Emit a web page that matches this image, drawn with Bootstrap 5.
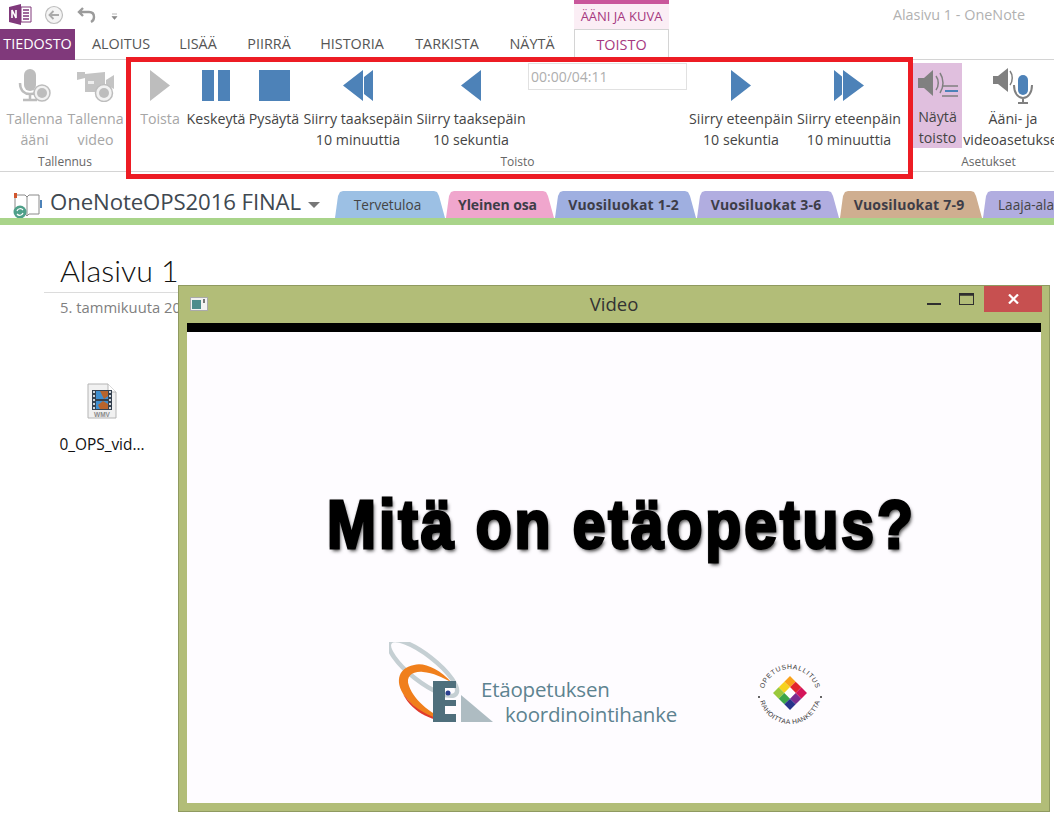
<!DOCTYPE html>
<html lang="fi">
<head>
<meta charset="UTF-8">
<title>Alasivu 1 - OneNote</title>
<link href="https://cdn.jsdelivr.net/npm/bootstrap@5.3.0/dist/css/bootstrap.min.css" rel="stylesheet">
<style>
body { font-family: "Open Sans", "Noto Sans", sans-serif; font-size: 14.2px; color: #444; background: #fff; overflow: hidden; }
.app { position: relative; width: 1054px; height: 815px; overflow: hidden; }

/* title bar */
.title-bar { height: 29px; padding-left: 9px; }
.title-text { color: #b1b1b1; font-size: 14.4px; margin-left: auto; margin-right: 29px; }
.ctx-head { position: absolute; left: 574px; top: 0; width: 95px; height: 29px; background: #fbeef5; border-top: 4px solid #c9579b; color: #a5387f; font-size: 13px; text-align: center; line-height: 24px; }

/* tabs */
.tab-row { height: 31px; border-bottom: 1px solid #d4d4d4; font-size: 14.4px; color: #555; }
.tab-item { text-align: center; line-height: 30px; flex: none; }
.tab-file { width: 75px; background: #80397b; color: #fff; height: 31px; }
.tab-active { width: 95px; height: 31px; background: #fff; border: 1px solid #d4d4d4; border-bottom: 0; color: #a5387f; line-height: 29px; }

/* ribbon */
.ribbon { height: 112px; border-bottom: 1px solid #d4d4d4; }
.rib-group { height: 100%; display: flex; flex-direction: column; flex: none; }
.rib-items { display: flex; height: 94px; padding-top: 3px; }
.rib-label { text-align: center; font-size: 12px; color: #666; line-height: 16px; }
.rib-btn { text-align: center; line-height: 21px; white-space: nowrap; display: flex; flex-direction: column; align-items: center; flex: none; }
.rib-icon { height: 44px; display: flex; align-items: center; justify-content: center; margin-bottom: 1px; }
.is-off { color: #a6a6a6; }
.is-on { background: #e0bfde; }
.time-box { width: 159px; height: 27px; border: 1px solid #e1e1e1; color: #aeaeae; font-size: 14px; line-height: 25px; padding-left: 2px; margin-left: -1px; margin-right: 2px; flex: none; }
.hilite { position: absolute; left: 126px; top: 57px; width: 787px; height: 122px; border: 5px solid #ed1c24; pointer-events: none; }

/* notebook bar */
.nb-bar { height: 53px; padding-left: 12px; border-bottom: 7px solid #a9d48a; }
.nb-name { font-size: 22.2px; color: #404850; margin-left: 8px; letter-spacing: -.1px; padding-bottom: 6px; }
.nb-caret { width: 0; height: 0; border: 6px solid transparent; border-top: 6px solid #777; border-bottom: 0; margin-left: 7px; margin-top: 1px; }
.nb-tabs { gap: 1px; height: 27px; }
.nb-tab { height: 27px; line-height: 28px; text-align: center; font-size: 13.6px; white-space: nowrap; flex: none; padding-right: 5px; clip-path: polygon(0 100%, 3px 5px, 5px 1px, 8px 0, calc(100% - 11px) 0, calc(100% - 8px) 1px, calc(100% - 6px) 5px, 100% 100%); }
.nb-tab.fat { font-weight: 700; font-size: 14px; color: #3d3d48; letter-spacing: -.1px; }
.nb-tab.fat.wide { letter-spacing: .2px; padding-right: 4px; }
.nb-tab.last { padding-left: 15px; padding-right: 0; text-align: left; clip-path: polygon(0 100%, 3px 5px, 5px 1px, 8px 0, 100% 0, 100% 100%); }

/* page */
.page-head { margin-top: 25px; margin-left: 44px; }
.page-title { font-family: "Lato", sans-serif; font-weight: 300; font-size: 30.4px; color: #111; padding-left: 16px; line-height: 41px; border-bottom: 1px solid #dcdcdc; height: 43px; width: 200px; }
.page-date { padding-left: 16px; color: #7f7f7f; font-size: 14.8px; line-height: 28px; }
.file-att { margin-top: 62px; width: 100px; margin-left: 52px; text-align: center; color: #111; font-size: 15.4px; white-space: nowrap; }
.file-att svg { display: block; margin: 0 auto 14px; }

/* video window */
.vid-win { position: absolute; left: 178px; top: 285px; width: 872px; height: 527px; background: #b2bd78; border: 1px solid #8f9a60; padding: 0 8px 8px; display: flex; flex-direction: column; }
.vid-title { height: 37px; position: relative; text-align: center; color: #333; font-size: 18.5px; line-height: 36px; }
.vid-title .sys { position: absolute; left: 3px; top: 11px; }
.vid-ctrl { position: absolute; right: -1px; top: 0; display: flex; align-items: flex-start; }
.vid-ctrl svg { display: block; }
.vid-close { width: 58px; height: 26px; background: #c75050; display: flex; align-items: center; justify-content: center; }
.vid-strip { height: 9px; background: #000; }
.vid-body { flex: 1; background: #fefcff; display: flex; flex-direction: column; align-items: center; }
.vid-head { margin-top: 151px; margin-left: 14px; height: 82px; font-family: "Liberation Sans", sans-serif; font-weight: 700; font-size: 68px; line-height: 82px; color: #000; -webkit-text-stroke: 3px #000; letter-spacing: 3.4px; text-shadow: 2px 3px 4px #444, -1px -1px 2px #999; white-space: nowrap; transform: scaleX(.865); }
.logo-row { margin-top: 77px; width: 100%; display: flex; align-items: flex-start; padding-left: 202px; }
.logo-name { color: #5d8390; font-size: 20.5px; line-height: 25px; margin-left: -18px; padding-top: 35px; letter-spacing: -.2px; }
.logo-name span { display: block; }
.logo-name .second { padding-left: 24px; }
.logo-badge { margin-left: 80px; margin-top: 18px; }
</style>
</head>
<body>
<div class="app">

  <!-- otsikkorivi -->
  <div class="title-bar d-flex align-items-center">
    <svg width="23" height="21" viewBox="0 0 23 21"><path d="M0 3 12 0v21L0 18z" fill="#80397b"/><path d="M12 3h10v15H12z" fill="#fff" stroke="#80397b"/><path d="M14 6h6M14 9h6M14 12h6M14 15h6" stroke="#80397b" stroke-width="1.5"/><path d="M3 14V6l4 8V6" fill="none" stroke="#fff" stroke-width="1.6"/></svg>
    <svg width="20" height="20" viewBox="0 0 20 20" style="margin-left:12px"><circle cx="10" cy="10" r="8.5" fill="#f4f4f4" stroke="#bdbdbd" stroke-width="1.2"/><path d="M15 10H6M9.500 6 5.500 10l4 4" fill="none" stroke="#aaa" stroke-width="1.8"/></svg>
    <svg width="20" height="18" viewBox="0 0 20 18" style="margin-left:13px"><path d="M6 2 2 6l4 4M2 6h10c4 0 5 3 5 5s-1 4-3 5" fill="none" stroke="#9b9b9b" stroke-width="2.400"/></svg>
    <svg width="7" height="7" viewBox="0 0 7 7" style="margin-left:14px;margin-top:3px"><path d="M1 1h5M1 3.500h5L3.500 6.500z" fill="#888" stroke="#888" stroke-width=".6"/></svg>
    <span class="title-text">Alasivu 1 - OneNote</span>
  </div>
  <div class="ctx-head">ÄÄNI JA KUVA</div>

  <!-- välilehdet -->
  <div class="tab-row d-flex">
    <div class="tab-item tab-file">TIEDOSTO</div>
    <div class="tab-item" style="width:92px">ALOITUS</div>
    <div class="tab-item" style="width:62px">LISÄÄ</div>
    <div class="tab-item" style="width:80px">PIIRRÄ</div>
    <div class="tab-item" style="width:86px">HISTORIA</div>
    <div class="tab-item" style="width:104px">TARKISTA</div>
    <div class="tab-item" style="width:66px;margin-right:9px">NÄYTÄ</div>
    <div class="tab-item tab-active">TOISTO</div>
  </div>

  <!-- nauha -->
  <div class="ribbon d-flex">
    <div class="rib-group" style="width:130px">
      <div class="rib-items">
        <div class="rib-btn is-off" style="width:65px;padding-left:4px">
          <div class="rib-icon"><svg width="34" height="34" viewBox="0 0 34 34"><rect x="6" y="1" width="12" height="22" rx="6" fill="#bdbdbd"/><path d="M2 15c0 8 5 11 10 11s8-2 9-5M12 26v5M5 32h14" fill="none" stroke="#bdbdbd" stroke-width="2.500"/><circle cx="24" cy="25" r="8" fill="#f2f2f2" stroke="#bdbdbd" stroke-width="1.500"/><circle cx="24" cy="25" r="5" fill="#bdbdbd"/></svg></div>
          <div>Tallenna<br>ääni</div>
        </div>
        <div class="rib-btn is-off" style="width:61px">
          <div class="rib-icon"><svg width="38" height="34" viewBox="0 0 38 34"><path d="M0 4h8v2l20-2v20H8V10L0 12z" fill="#c4c4c4"/><path d="M29 12l8-5v14l-8-4z" fill="#c4c4c4"/><rect x="11" y="13" width="6" height="3" fill="#eee"/><circle cx="27" cy="25" r="8.500" fill="#f2f2f2" stroke="#bdbdbd" stroke-width="1.500"/><circle cx="27" cy="25" r="5" fill="#bdbdbd"/></svg></div>
          <div>Tallenna<br>video</div>
        </div>
      </div>
      <div class="rib-label">Tallennus</div>
    </div>

    <div class="rib-group" style="width:783px">
      <div class="rib-items">
        <div class="rib-btn is-off" style="width:60px">
          <div class="rib-icon"><svg width="20" height="31" viewBox="0 0 20 31"><path d="M0 0l20 15.500L0 31z" fill="#bdbdbd"/></svg></div>
          <div>Toista</div>
        </div>
        <div class="rib-btn" style="width:52px">
          <div class="rib-icon"><svg width="28" height="31" viewBox="0 0 28 31"><path d="M0 0h12v31H0zM16 0h12v31H16z" fill="#4d82b8"/></svg></div>
          <div>Keskeytä</div>
        </div>
        <div class="rib-btn" style="width:64px">
          <div class="rib-icon"><svg width="31" height="31" viewBox="0 0 31 31"><path d="M0 0h31v31H0z" fill="#4d82b8"/></svg></div>
          <div>Pysäytä</div>
        </div>
        <div class="rib-btn" style="width:104px">
          <div class="rib-icon"><svg width="30" height="31" viewBox="0 0 30 31"><path d="M20 0v31L0 15.500zM30 0v31l-9-7V7z" fill="#4d82b8"/></svg></div>
          <div>Siirry taaksepäin<br>10 minuuttia</div>
        </div>
        <div class="rib-btn" style="width:116px;margin-left:3px">
          <div class="rib-icon"><svg width="20" height="31" viewBox="0 0 20 31"><path d="M20 0v31L0 15.500z" fill="#4d82b8"/></svg></div>
          <div>Siirry taaksepäin<br>10 sekuntia</div>
        </div>
        <div class="time-box">00:00/04:11</div>
        <div class="rib-btn" style="width:104px">
          <div class="rib-icon"><svg width="20" height="31" viewBox="0 0 20 31"><path d="M0 0v31l20-15.500z" fill="#4d82b8"/></svg></div>
          <div>Siirry eteenpäin<br>10 sekuntia</div>
        </div>
        <div class="rib-btn" style="width:112px">
          <div class="rib-icon"><svg width="30" height="31" viewBox="0 0 30 31"><path d="M0 0l8 6.500v18L0 31zM9 0v31l21-15.500z" fill="#4d82b8"/></svg></div>
          <div>Siirry eteenpäin<br>10 minuuttia</div>
        </div>
      </div>
      <div class="rib-label pe-2">Toisto</div>
    </div>

    <div class="rib-group" style="width:151px">
      <div class="rib-items">
        <div class="rib-btn is-on" style="width:49px;height:85px">
          <div class="rib-icon"><svg width="40" height="34" viewBox="0 0 40 34"><path d="M0 11h6l9-8v26l-9-8H0z" fill="#808080"/><path d="M18 9c3 4 3 10 0 14M22 6c4 6 4 14 0 20" fill="none" stroke="#808080" stroke-width="1.500"/><path d="M24 19h16M24 29h16" stroke="#808080" stroke-width="1.500"/><path d="M27 24h13" stroke="#4d82b8" stroke-width="2"/></svg></div>
          <div>Näytä<br>toisto</div>
        </div>
        <div class="rib-btn" style="width:92px;margin-left:5px">
          <div class="rib-icon"><svg width="40" height="38" viewBox="0 0 40 38"><path d="M0 10h5l10-8v24L5 18H0z" fill="#808080"/><path d="M17 5c3 4 3 10 0 14" fill="none" stroke="#808080" stroke-width="1.500"/><rect x="25" y="9" width="10" height="20" rx="5" fill="#4d82b8"/><path d="M21 19c0 8 4 13 9 13s9-5 9-13M30 32v4M25 37h10" fill="none" stroke="#808080" stroke-width="2"/></svg></div>
          <div>Ääni- ja<br>videoasetukset</div>
        </div>
      </div>
      <div class="rib-label">Asetukset</div>
    </div>
  </div>
  <div class="hilite"></div>

  <!-- muistikirjan rivi -->
  <div class="nb-bar d-flex align-items-end">
    <div class="d-flex align-items-center" style="height:27px;flex:none;width:323px">
      <svg width="30" height="26" viewBox="0 0 30 26"><path d="M3 3h10l2 2 2-2h10v19H17l-2 2-2-2H3z" fill="#fff" stroke="#8a8a8a"/><path d="M15 5v18" stroke="#8a8a8a"/><path d="M2 1h3v5H2z" fill="#d2562e"/><path d="M28 8h2v8h-2z" fill="#4d82b8"/><circle cx="8" cy="20" r="6.500" fill="#4fa089"/><path d="M5 19a3.500 3.500 0 0 1 6-1M11 21a3.500 3.500 0 0 1-6 1" fill="none" stroke="#fff" stroke-width="1.200"/></svg>
      <span class="nb-name text-nowrap">OneNoteOPS2016 FINAL</span>
      <span class="nb-caret"></span>
    </div>
    <div class="nb-tabs d-flex">
      <div class="nb-tab" style="width:110px;background:#9cc0e4">Tervetuloa</div>
      <div class="nb-tab fat" style="width:108px;background:#f0a6cd">Yleinen osa</div>
      <div class="nb-tab fat wide" style="width:141px;background:#9fafe0">Vuosiluokat 1-2</div>
      <div class="nb-tab fat wide" style="width:142px;background:#b1ade0">Vuosiluokat 3-6</div>
      <div class="nb-tab fat wide" style="width:142px;background:#cfae90">Vuosiluokat 7-9</div>
      <div class="nb-tab last" style="width:72px;background:#b1ade0">Laaja-ala</div>
    </div>
  </div>

  <!-- sivu -->
  <div class="page-head">
    <div class="page-title">Alasivu 1</div>
    <div class="page-date text-nowrap">5. tammikuuta 2016</div>
  </div>
  <div class="file-att">
    <svg width="30" height="36" viewBox="0 0 30 36"><path d="M1 1h20l8 8v26H1z" fill="#f1f1f1" stroke="#b5b5b5"/><path d="M21 1v8h8" fill="#fff" stroke="#b5b5b5"/><rect x="5" y="7" width="20" height="20" fill="#35414f"/><path d="M6 8h2v2H6zM6 12h2v2H6zM6 16h2v2H6zM6 20h2v2H6zM6 24h2v2H6zM22 8h2v2h-2zM22 12h2v2h-2zM22 16h2v2h-2zM22 20h2v2h-2zM22 24h2v2h-2z" fill="#cfd6dc"/><rect x="9" y="8" width="12" height="8" fill="#3f8fd0"/><rect x="9" y="18" width="12" height="8" fill="#3f8fd0"/><path d="M13 8h8v5l-4 3zM11 22l5-4 5 3v5h-8z" fill="#b8642c"/><text x="15" y="34" text-anchor="middle" font-family="Liberation Sans, sans-serif" font-size="6.500" font-weight="700" fill="#8a8a8a">WMV</text></svg>
    <div>0_OPS_vid...</div>
  </div>

  <!-- videoikkuna -->
  <div class="vid-win">
    <div class="vid-title">
      <svg class="sys" width="18" height="14" viewBox="0 0 18 14"><rect x=".5" y=".5" width="17" height="13" fill="#f2f2f2" stroke="#aaa"/><rect x="2" y="3" width="9" height="9" fill="#4c8c8c"/><rect x="13" y="2" width="2" height="4" fill="#777"/></svg>
      Video
      <div class="vid-ctrl">
        <svg width="31" height="26" viewBox="0 0 31 26"><path d="M0 18h14" stroke="#2f2f2f" stroke-width="2"/></svg>
        <svg width="26" height="26" viewBox="0 0 26 26"><rect x="1.500" y="7.500" width="14" height="11" fill="none" stroke="#2f2f2f"/><path d="M1.500 8.500h14" stroke="#2f2f2f" stroke-width="2.500"/></svg>
        <div class="vid-close"><svg width="11" height="10" viewBox="0 0 11 10"><path d="M1 .5l9 9M10 .5l-9 9" stroke="#fff" stroke-width="2.200"/></svg></div>
      </div>
    </div>
    <div class="vid-strip"></div>
    <div class="vid-body">
      <div class="vid-head">Mitä on etäopetus?</div>
      <div class="logo-row">
        <svg width="110" height="84" viewBox="0 0 110 84">
          <ellipse cx="34" cy="26" rx="42" ry="13" transform="rotate(38 34 26)" fill="none" stroke="#c5cfd3" stroke-width="4.500"/>
          <path d="M63 41C50 26 34 20 25 23 8 26 5 42 18 57 30 72 48 79 64 80 44 74 26 60 20 44 16 34 24 29 34 30 44 31 54 35 63 41z" fill="#f07f1c"/>
          <path d="M14 52c4 5 6 7 10 11 12 10 26 15 40 17-18 0-40-8-50-28z" fill="#e03a2c"/>
          <path d="M44 39h23v7H56v12h11v6H56v8h11v8H44z" fill="#4f6f7c"/>
          <circle cx="59" cy="51" r="2.500" fill="#2b3f8f"/>
          <path d="M72 53l32 27H72z" fill="#aebcc2"/>
        </svg>
        <div class="logo-name"><span>Etäopetuksen</span><span class="second">koordinointihanke</span></div>
        <svg class="logo-badge" width="66" height="66" viewBox="0 0 66 66">
          <defs>
            <path id="arcTop" d="M6 36a27 27 0 1 1 54 0"/>
            <path id="arcBot" d="M2 33a31 31 0 0 0 62 0"/>
          </defs>
          <text font-family="Liberation Sans, sans-serif" font-size="6.800" letter-spacing=".7" fill="#333"><textPath href="#arcTop" startOffset="50%" text-anchor="middle">OPETUSHALLITUS</textPath></text>
          <text font-family="Liberation Sans, sans-serif" font-size="6.600" letter-spacing=".4" fill="#333"><textPath href="#arcBot" startOffset="50%" text-anchor="middle">RAHOITTAA HANKETTA</textPath></text>
          <circle cx="2" cy="37" r="1" fill="#333"/><circle cx="64" cy="37" r="1" fill="#333"/>
          <g transform="rotate(45 33 33)">
            <rect x="21" y="21" width="8" height="8" fill="#f9a11b"/><rect x="29" y="21" width="8" height="8" fill="#e1262d"/><rect x="37" y="21" width="8" height="8" fill="#d4145a"/>
            <rect x="21" y="29" width="8" height="8" fill="#f6d21f"/><rect x="29" y="29" width="8" height="8" fill="#fff"/><rect x="37" y="29" width="8" height="8" fill="#7b2d90"/>
            <rect x="21" y="37" width="8" height="8" fill="#9ac93c"/><rect x="29" y="37" width="8" height="8" fill="#3ca64a"/><rect x="37" y="37" width="8" height="8" fill="#27348b"/>
          </g>
        </svg>
      </div>
    </div>
  </div>

</div>
<script src="https://cdn.jsdelivr.net/npm/bootstrap@5.3.0/dist/js/bootstrap.bundle.min.js"></script>
</body>
</html>
